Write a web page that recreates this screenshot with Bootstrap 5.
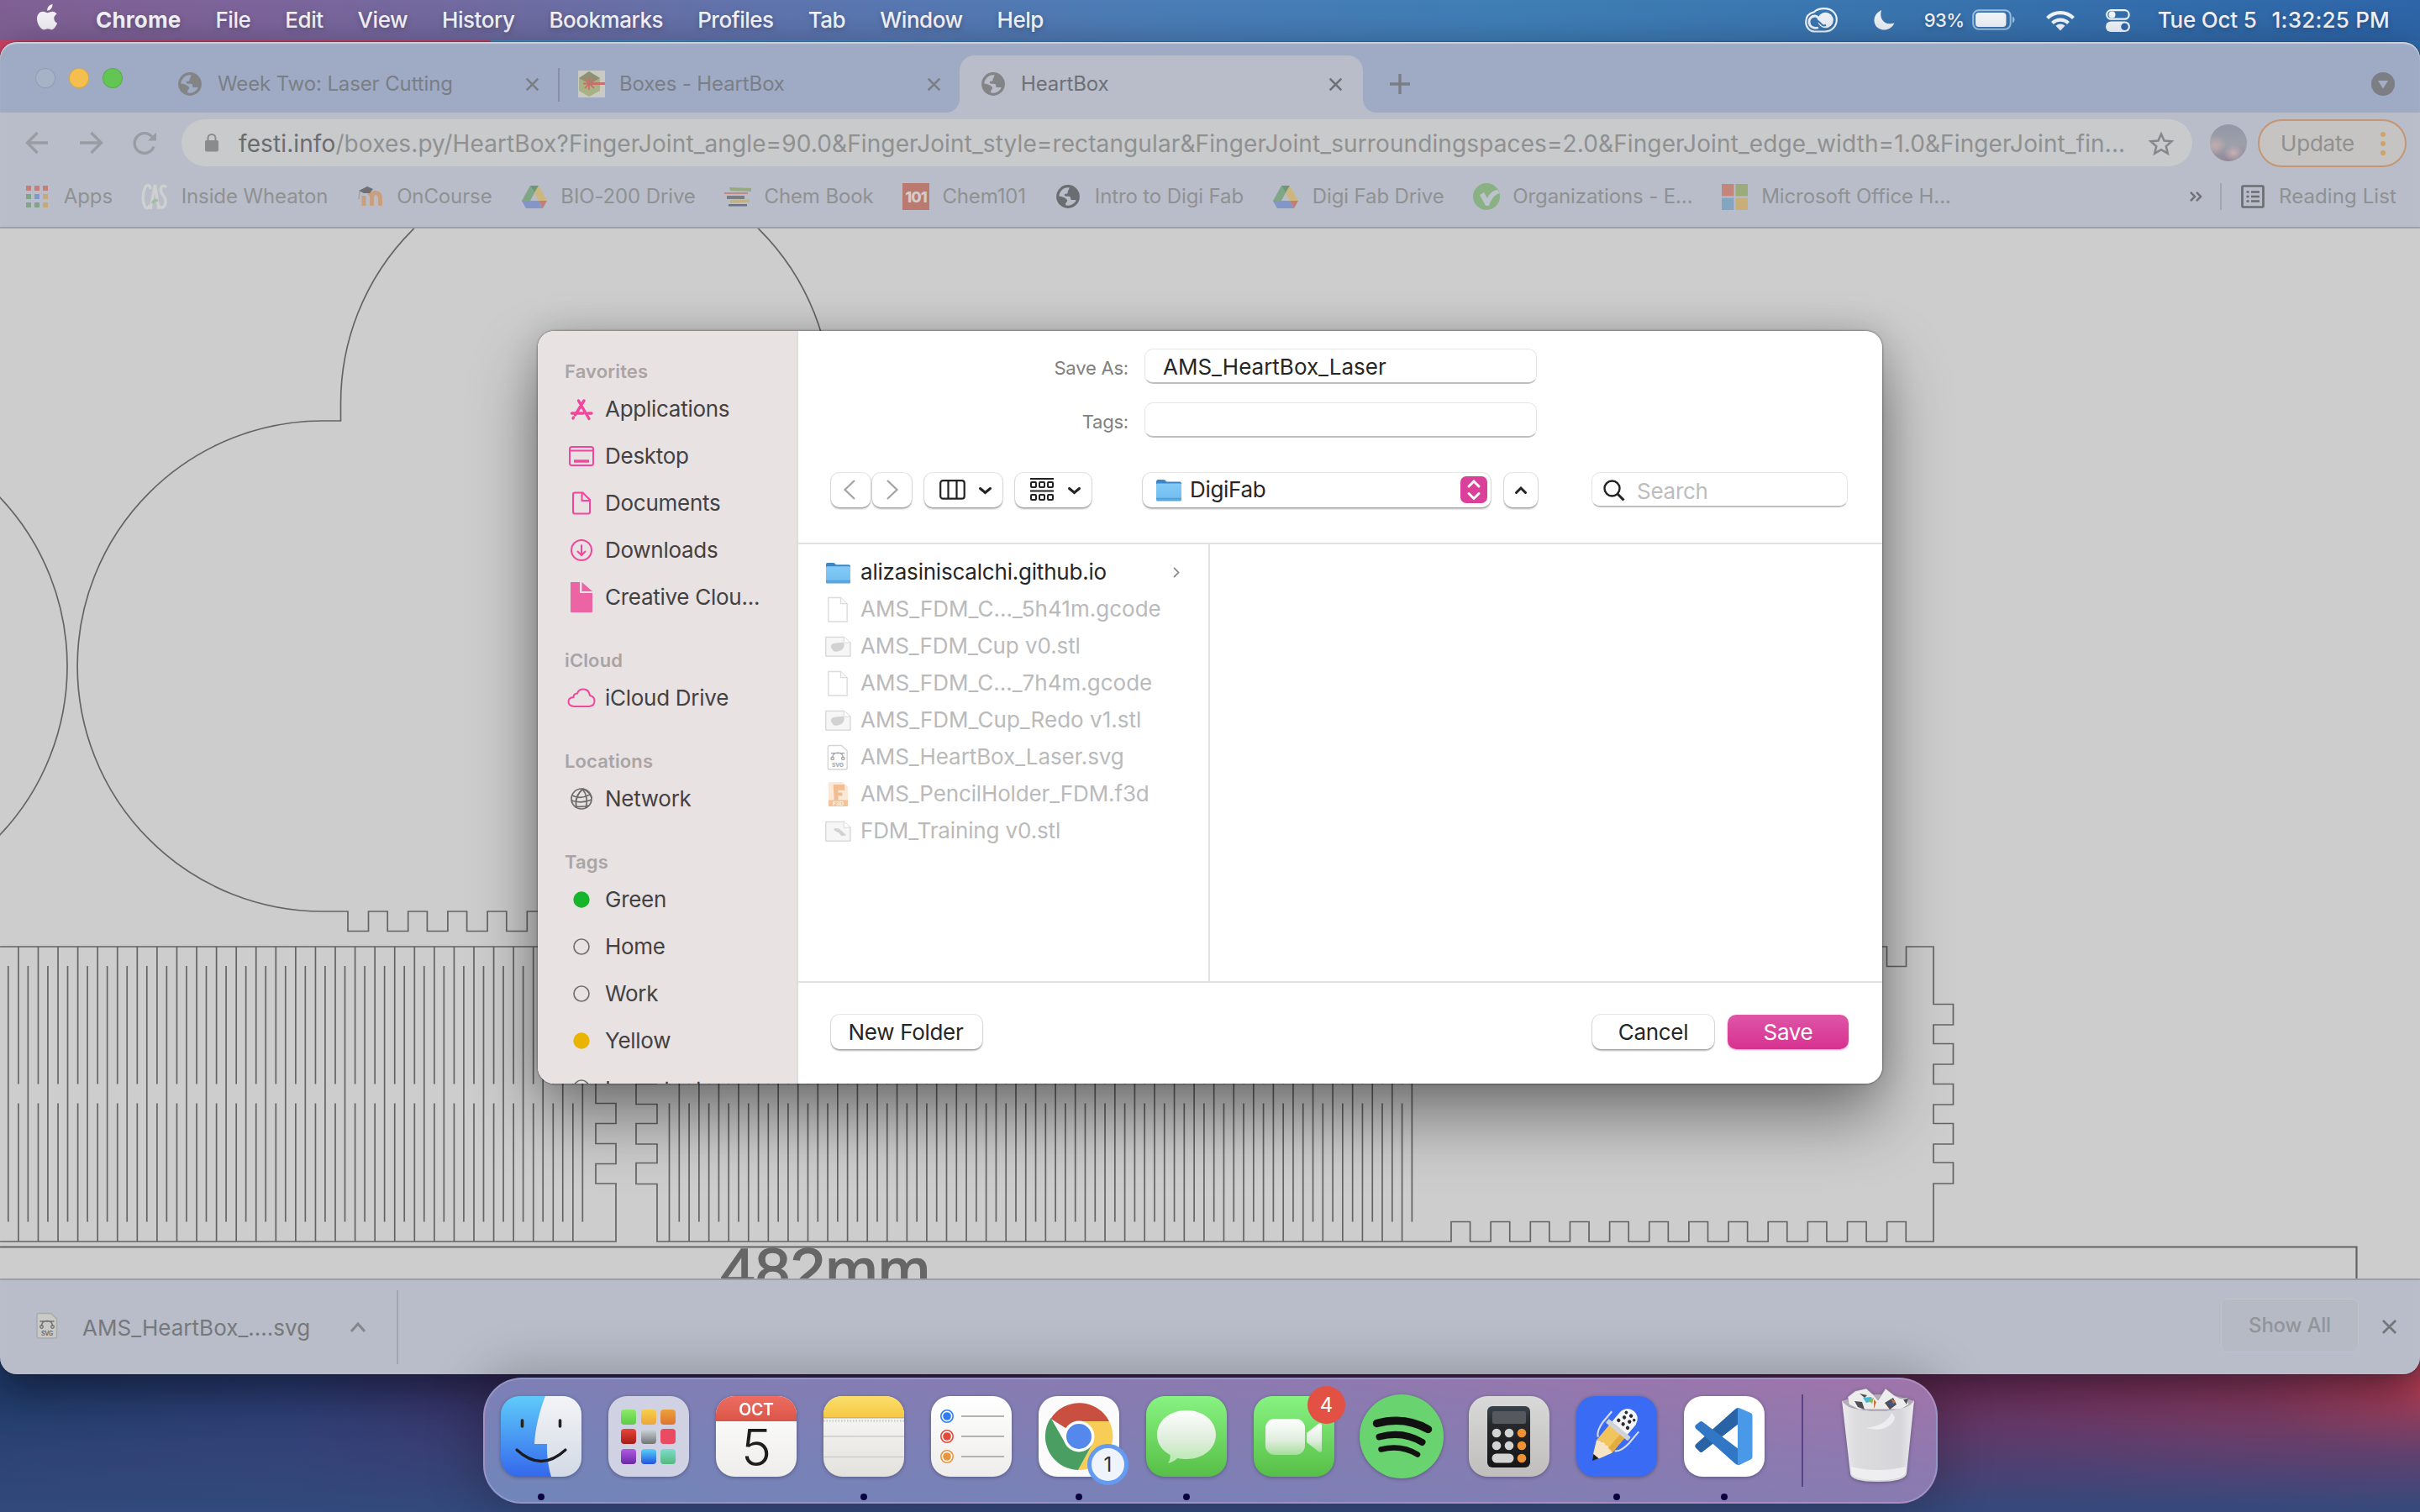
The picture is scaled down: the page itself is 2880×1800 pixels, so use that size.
<!DOCTYPE html>
<html lang="en">
<head>
<meta charset="utf-8">
<title>HeartBox</title>
<link rel="stylesheet" href="https://cdn.jsdelivr.net/npm/bootstrap@5.3.0/dist/css/bootstrap.min.css">
<script src="https://cdn.jsdelivr.net/npm/bootstrap@5.3.0/dist/js/bootstrap.bundle.min.js"></script>
<style>
html,body{width:2880px;height:1800px;overflow:hidden}
body{font-family:Inter,"Liberation Sans",sans-serif;font-size:26px;line-height:34px;letter-spacing:-.008em;color:#262626;margin:0;position:relative;
 background:
 linear-gradient(90deg,#d04464 0 583px,#4a97cd 585px,#2f6db0 100%) 0 0/100% 90px no-repeat,
 linear-gradient(180deg,transparent 1650px,rgba(58,72,125,.55) 1730px,rgba(50,74,125,.97) 1800px),
 radial-gradient(520px 200px at 2920px 1650px,#c03e50,rgba(150,55,80,.6) 45%,transparent),
 linear-gradient(90deg,#1f3c6a 0,#2a3c72 350px,#3c2f62 620px,#5a2c5c 1500px,#74305c 2300px,#84386a 2880px)}
svg{display:block;overflow:visible;flex:none}
.menubar{height:48px;background:linear-gradient(90deg,#806094 0,#7c649a 11%,#6d6ca2 22%,#5a76b0 35%,#4a7cb5 48%,#3f7eb5 62%,#3872ad 82%,#2d65a8 100%);color:#f4f3f8;font-weight:500;letter-spacing:-.018em;text-shadow:0 2px 6px rgba(0,0,0,.25);padding:0 36px 0 42px}
.menubar nav{gap:41px;margin-left:43px}
.menubar b{font-weight:700;letter-spacing:.006em}
.browser{position:relative;margin-top:2px;height:1586px;border-radius:20px;overflow:hidden;background:#b8bdc9}
.browser::after{content:"";position:absolute;inset:0;border-radius:20px;box-shadow:inset 0 2px 1px rgba(215,220,230,.75);pointer-events:none}
.frame-shadow{position:absolute;left:0;top:50px;width:2880px;height:1586px;border-radius:20px;box-shadow:0 16px 50px rgba(10,10,25,.6),0 0 2px rgba(0,0,0,.6)}
.strip{height:84px;background:#9fabc4;padding:16px 30px 0 42px;color:#7a7e86;font-size:24px;letter-spacing:-.005em}
.light{width:24px;height:24px;border-radius:50%;border:1.5px solid rgba(0,0,0,.12)}
.lights{gap:16px;margin-top:15px;height:24px;width:144px}
.tb{width:478px;height:68px;padding:0 20px 0 24px;position:relative}
.tb .ttl{margin-left:17px}
.tb.on{width:480px;background:#b8bdc9;border-radius:18px 18px 0 0;color:#6d7076}
.tb.on::before,.tb.on::after{content:"";position:absolute;bottom:0;width:16px;height:16px}
.tb.on::before{left:-16px;background:radial-gradient(circle at 0 0,#9fabc4 15.5px,#b8bdc9 16.5px)}
.tb.on::after{right:-16px;background:radial-gradient(circle at 100% 0,#9fabc4 15.5px,#b8bdc9 16.5px)}
.tb.sep{height:68px}
.tb.sep::after{content:"";position:absolute;right:-2px;top:15px;width:2px;height:40px;background:#8790a4}
.fav{width:32px;display:flex;justify-content:center}
.bar{height:72px;padding:0 16px 0 30px}
.omni{width:2394px;height:56px;border-radius:28px;background:#c8cacb;color:#8f9091;font-size:28px;letter-spacing:.0039em;padding:1px 22px 0 27px;white-space:nowrap}
.omni span{color:#6a6b6d}
.update{width:177px;height:57px;border:2.5px solid #c49673;border-radius:29px;background:#c5c4c2;color:#8f9091;padding:1px 23px 0 25px}
.avatar{width:44px;height:44px;border-radius:50%;background:radial-gradient(14px 12px at 6px 25px,#c3acad,transparent),radial-gradient(12px 10px at 28px 34px,#c5b0b2,transparent),linear-gradient(#9297a6,#9da0aa 55%,#918797)}
.marks{height:66px;padding:1px 28px 9px;font-size:24px;color:#8f9193;border-bottom:2px solid #9b9fa9;gap:34px;letter-spacing:-.005em}
.marks a{color:inherit;text-decoration:none;display:flex;align-items:center;gap:15.8px;white-space:nowrap}
.sheet{height:1250px;background:#cdcdcd}
.shelf{height:114px;border-top:2px solid #9b9ea8;color:#77787b;padding:0 24px 0 43px}
.shelf .rule{width:2px;height:88px;background:#a2a6b1}
.showall{width:164px;height:64px;border:1.5px solid #c0c3c8;border-radius:8px;font-size:24px;font-weight:500;color:#929499;background:#b5bac5}
.sheetdlg{position:absolute;left:640px;top:394px;width:1600px;height:896px;border-radius:20px;overflow:hidden;background:#fff}
.dlgshadow{position:absolute;left:640px;top:394px;width:1600px;height:896px;border-radius:20px;box-shadow:0 40px 80px rgba(0,0,0,.42),0 0 40px rgba(0,0,0,.14),0 0 2px 1px rgba(0,0,0,.3)}
.side{width:310px;background:#e8e2e2;border-right:2px solid #e2dddd;padding-top:1px;color:#434142;flex:none}
.side h6{margin:0;height:64px;padding:30px 0 0 32px;font-size:22px;line-height:34px;font-weight:600;color:#aaa4a5;letter-spacing:.006em}
.side .it{height:56px;padding-left:35px;gap:11px;letter-spacing:-.0105em;white-space:nowrap}
.side .it svg{width:34px;height:34px;margin-right:0}
.lbl{width:393px;font-size:22px;color:#808080;margin-right:19px;margin-top:3px;line-height:38px}
.fld{width:467px;height:42px;border-radius:10px;border:1.5px solid #e6e6e6;border-bottom:2px solid #bfbfbf;padding:2px 0 0 21px;display:flex;align-items:center;letter-spacing:0}
.pb{height:41px;border-radius:10px;background:#fff;box-shadow:0 0 0 1px rgba(0,0,0,.08),0 1.5px 2px rgba(0,0,0,.3);display:flex;align-items:center;justify-content:center;flex:none;letter-spacing:-.012em}
.files{width:490px;border-right:2px solid #e2e2e2;padding:11px 30px 0 32px;color:#bababa;letter-spacing:-.003em}
.files>div{height:44px;display:flex;align-items:center;gap:11px;white-space:nowrap}
.files svg.fi{width:31px;height:31px}
.foot{height:122px;border-top:2px solid #e2e2e2;padding:0 40px 3px 39px}
.save{background:linear-gradient(#df55a8,#d6328f);color:#fff;box-shadow:0 1px 2px rgba(214,50,143,.5)}
.dock{position:absolute;left:575px;top:1640px;width:1731px;height:150px;border-radius:46px;border:2px solid rgba(200,190,230,.35);background:linear-gradient(8deg,#7086ba 0,#7c80b6 35%,#8c7ab0 70%,#a074aa 100%);box-shadow:0 0 60px 10px rgba(0,0,0,.22);padding:20px 19px 0;gap:32px}
.dock .app{width:96px;height:96px;position:relative;flex:none}
.dock .app>svg{width:96px;height:96px;filter:drop-shadow(0 1px 2px rgba(0,0,0,.3))}
.dock .run::after{content:"";position:absolute;left:44px;top:116px;width:8px;height:8px;border-radius:50%;background:#0c0440}
.dock .bar2{width:2px;height:110px;background:rgba(70,50,120,.75);margin:-2px 10px 0 12px}
.bdg{position:absolute;border-radius:50%;display:flex;align-items:center;justify-content:center;letter-spacing:0}
</style>
</head>
<body>
<svg width="0" height="0" class="position-absolute">
<defs>
<symbol id="globe" viewBox="0 0 28 28"><circle cx="14" cy="14" r="12.3" fill="none" stroke="currentColor" stroke-width="3.2"/><path fill="currentColor" d="M16.5 2.5c-1.8 1.6-1 3-2.2 4.200-1.300 1.200-.3 2.700-.7 3.300-.7 1.100-3.800.2-3.900 2 0 1.900 2.500 1.800 4.800 1.800 2.500 0 2.800 1 2.600 2.800-.1 1.300 1.100 1.500 2.600 1.500h2.800c1.300 0 2.500.9 2.700 2.100 2-3 2.800-8.500.3-12.500C23.300 4.500 20 2.800 16.500 2.500zM2 13.500c2.200-.4 7 1.100 8.800 2.400 1.300 1 2.500 1.400 2.300 3.200-.2 1.700-1.700 1.900-1.900 3.200-.1 1 .1 2.300.2 3.600C6 24.800 1.500 20 2 13.500z"/></symbol>
<symbol id="cross" viewBox="0 0 20 20"><path d="M2 2l16 16M18 2L2 18" stroke="currentColor" stroke-width="3" fill="none"/></symbol>
<symbol id="drive" viewBox="0 0 30 27"><path fill="#7fa786" d="M10 0L15 8.700 5.200 26.500 0 18z"/><path fill="#6d9876" d="M10 0h10l-5 8.700z"/><path fill="#cdb77d" d="M20 0l10 18H20L15 8.700z"/><path fill="#8496c8" d="M0 18h20l5 9H5z"/><path fill="#c47e78" d="M20 18h10l-5 9z"/></symbol>
<linearGradient id="fold" x2="0" y2="1"><stop offset="0" stop-color="#83caf7"/><stop offset=".75" stop-color="#74c0f3"/><stop offset="1" stop-color="#4f9ed9"/></linearGradient>
<symbol id="folder" viewBox="0 0 32 32"><path fill="#3b86c6" d="M1 6.500Q1 4 3 4h7q1.500 0 2.500 1.500l.7 1H29q2 0 2 2V12H1z"/><rect x="1" y="8.500" width="30" height="21" rx="1.500" fill="url(#fold)"/><path d="M1 26.500h30" stroke="#4f9cd6" stroke-width="1"/></symbol>
<symbol id="doc" viewBox="0 0 32 32"><path fill="#fff" stroke="#dcdcdc" stroke-width="1.500" d="M4 1.500h15l8 7.500v22H4z"/><path d="M19 1.500V9h8" fill="#f7f7f7" stroke="#dcdcdc" stroke-width="1.300"/></symbol>
<symbol id="stl" viewBox="0 0 32 32"><path fill="#f6f6f6" stroke="#d5d5d5" stroke-width="1.300" d="M.8 4.500H23l8 7v16.500H.8z"/><path d="M23 4.500v7h8" fill="#fff" stroke="#d8d8d8"/><path fill="#d2d2d2" d="M8 14c2-3 8-2 13-3 5 1 2 8-2 10s-8 2-10-1c-1-2-3-3-1-6z"/></symbol>
<symbol id="stl2" viewBox="0 0 32 32"><path fill="#f6f6f6" stroke="#d5d5d5" stroke-width="1.300" d="M.8 4.500H23l8 7v16.500H.8z"/><path d="M23 4.500v7h8" fill="#fff" stroke="#d8d8d8"/><path fill="#d2d2d2" d="M11 12l6 1 6 5 3 3-6 1-3-4-6-3z"/></symbol>
<symbol id="svgdoc" viewBox="0 0 32 32"><path fill="var(--p,#fff)" stroke="var(--l,#d5d5d5)" stroke-width="1.500" d="M6 1.500h14l7 6.500v21q0 2-2 2H6q-2.500 0-2.500-2V3.500q0-2 2.500-2z"/><g fill="none" stroke="var(--k,#a3a3a3)" stroke-width="1.300"><path d="M7 11h17M9 17c0-4.500 3-6.500 6.500-6.500s6.500 2 6.500 6.500"/><circle cx="9" cy="17.500" r="1.800"/><circle cx="22" cy="17.500" r="1.800"/></g><text x="15.500" y="28" font-size="7" font-weight="700" text-anchor="middle" fill="var(--k,#a3a3a3)" font-family="Inter">SVG</text></symbol>
<symbol id="f3d" viewBox="0 0 32 32"><path fill="#fae9d9" d="M4 1h17l7 6v16H4z"/><path fill="#efbf93" d="M10 4h14v7h-8v3h5v4h-5v6h-5z"/><path fill="#f3c49a" d="M4 23h24v7q0 1-1 1H5q-1 0-1-1z"/><text x="16" y="29.500" font-size="7" font-weight="700" text-anchor="middle" fill="#fdf1e4" font-family="Inter">F3D</text></symbol>
<linearGradient id="gFi" x2="0" y2="1"><stop offset="0" stop-color="#5fcbfa"/><stop offset="1" stop-color="#3468ec"/></linearGradient>
<linearGradient id="gFw" x2="0" y2="1"><stop offset="0" stop-color="#f3f4f6"/><stop offset="1" stop-color="#d2dae6"/></linearGradient>
<linearGradient id="gGr" x2="0" y2="1"><stop offset="0" stop-color="#87f381"/><stop offset="1" stop-color="#57bf47"/></linearGradient>
<linearGradient id="gYe" x2="0" y2="1"><stop offset="0" stop-color="#fbdf6c"/><stop offset="1" stop-color="#f6c843"/></linearGradient>
<linearGradient id="gWh" x2="0" y2="1"><stop offset="0" stop-color="#fff"/><stop offset="1" stop-color="#eeedeb"/></linearGradient>
<linearGradient id="gNo" x2="0" y2="1"><stop offset="0" stop-color="#fbfbfa"/><stop offset="1" stop-color="#e3e1dc"/></linearGradient>
<linearGradient id="gRd" x2="0" y2="1"><stop offset="0" stop-color="#ee6c60"/><stop offset="1" stop-color="#d95548"/></linearGradient>
<linearGradient id="gCa" x2="0" y2="1"><stop offset="0" stop-color="#d9d9d9"/><stop offset="1" stop-color="#bfbebc"/></linearGradient>
<linearGradient id="gCb" x2="0" y2="1"><stop offset="0" stop-color="#39424c"/><stop offset=".3" stop-color="#26282b"/><stop offset="1" stop-color="#161617"/></linearGradient>
<linearGradient id="gTr" x2="1" y2="0"><stop offset="0" stop-color="#ececee"/><stop offset=".2" stop-color="#dcdcde"/><stop offset=".8" stop-color="#d6d5d9"/><stop offset="1" stop-color="#ebebee"/></linearGradient>
<linearGradient id="gBu" x2="0" y2="1"><stop offset="0" stop-color="#fdfefd"/><stop offset=".6" stop-color="#dcecd9"/><stop offset="1" stop-color="#b4eaab"/></linearGradient>
<linearGradient id="gFt" x2="0" y2="1"><stop offset="0" stop-color="#fff"/><stop offset=".6" stop-color="#dfeedd"/><stop offset="1" stop-color="#a6dd9c"/></linearGradient>
<linearGradient id="gL1" x2="0" y2="1"><stop offset="0" stop-color="#8bea68"/><stop offset="1" stop-color="#5dcb47"/></linearGradient>
<linearGradient id="gL2" x2="0" y2="1"><stop offset="0" stop-color="#f6cf4a"/><stop offset="1" stop-color="#efa638"/></linearGradient>
<linearGradient id="gL3" x2="0" y2="1"><stop offset="0" stop-color="#eda03c"/><stop offset="1" stop-color="#de742f"/></linearGradient>
<linearGradient id="gL4" x2="0" y2="1"><stop offset="0" stop-color="#e8453a"/><stop offset="1" stop-color="#a61d16"/></linearGradient>
<linearGradient id="gL5" x2="0" y2="1"><stop offset="0" stop-color="#d0d9df"/><stop offset="1" stop-color="#717476"/></linearGradient>
<linearGradient id="gL6" x2="0" y2="1"><stop offset="0" stop-color="#b05ae4"/><stop offset="1" stop-color="#6b28a4"/></linearGradient>
<linearGradient id="gL7" x2="0" y2="1"><stop offset="0" stop-color="#56d2fa"/><stop offset="1" stop-color="#2452e0"/></linearGradient>
<linearGradient id="gL8" x2="0" y2="1"><stop offset="0" stop-color="#7fdccb"/><stop offset="1" stop-color="#52b87d"/></linearGradient>
<clipPath id="sq"><rect width="96" height="96" rx="22"/></clipPath>
</defs></svg>

<header class="menubar d-flex align-items-center justify-content-between">
 <div class="d-flex align-items-center">
  <svg width="29" height="34" viewBox="0 0 29 34" fill="#f3f1f6" style="margin-top:-6px"><path d="M20.500 1c.2 2.500-.8 4.400-2 5.700-1.200 1.300-2.800 2.100-4.300 2-.2-2.300.7-4.200 1.900-5.500C17.300 1.900 19 1.100 20.500 1z"/><path d="M25.600 12.800c-2.300 1.400-3.400 3.200-3.300 5.300.1 2.700 1.600 4.600 3.800 5.500-.8 2.600-3.700 7.700-6.300 7.700-1.800 0-2.600-1.100-4.900-1.100s-3 1.100-4.800 1.100C6.500 31.300 2 24.500 2 18.300 2 13 5.400 9.800 9.100 9.800c2.200 0 4.100 1.400 5.500 1.400 1.300 0 3.400-1.500 6-1.500 1.800 0 3.900 1.100 5 3.100z"/></svg>
  <nav class="d-flex"><b>Chrome</b><span>File</span><span>Edit</span><span>View</span><span>History</span><span>Bookmarks</span><span>Profiles</span><span>Tab</span><span>Window</span><span>Help</span></nav>
 </div>
 <div class="d-flex align-items-center">
  <svg width="39" height="30" viewBox="0 0 39 30" fill="none" stroke="#eef2f8" stroke-width="2.200"><path d="M11 5.200C14 2.300 18 1.200 23 1.200c9 0 14.800 5.800 14.800 13.300S32 28.500 24 28.500H12C5.500 28.500 1.200 23.500 1.200 17S5.500 6.500 11 5.200z"/><circle cx="24.500" cy="15" r="9.300" fill="#eef2f8" stroke="none"/><path d="M16 24c-6 1.500-11-1.500-11-7 0-4 3-7 7-7 6 0 7 12 14 12" stroke-width="2.800"/><path d="M13 15.500c5-1 7 9 12 5" stroke="#3a74ae" stroke-width="2"/></svg>
  <svg width="27" height="27" viewBox="0 0 27 27" fill="#eef2f8" style="margin-left:42px"><path d="M10 1C2 5 0 12 2.500 18c3 7.500 17 10.500 23-1.500C13 20 7 11 10 1z"/></svg>
  <span style="margin-left:34px;font-size:22px">93%</span>
  <svg width="51" height="26" viewBox="0 0 51 26" style="margin-left:9px"><rect x="1.200" y="1.200" width="44.500" height="22.500" rx="6.500" fill="none" stroke="#9dbfe0" stroke-width="2"/><rect x="4" y="4" width="36.500" height="17" rx="4" fill="#f0f4f9"/><path d="M48 8.500q2.600 1 2.600 4T48 16.500z" fill="#9dbfe0"/></svg>
  <svg width="34" height="25" viewBox="0 0 34 25" style="margin-left:37px" fill="none" stroke="#f0f4f9" stroke-width="4.200"><path d="M1.500 9.500a22 22 0 0 1 31 0"/><path d="M7.500 15.500a13.500 13.500 0 0 1 19 0"/><path fill="#f0f4f9" stroke="none" d="M17 24.500l-5.500-5.800a8 8 0 0 1 11 0z"/></svg>
  <svg width="29" height="27" viewBox="0 0 29 27" style="margin-left:37px"><rect x="1.200" y="1.200" width="26.500" height="10.500" rx="5.200" fill="none" stroke="#f0f4f9" stroke-width="2.200"/><circle cx="7.500" cy="6.500" r="4" fill="#f0f4f9"/><rect y="14.500" width="29" height="12.500" rx="6.200" fill="#f0f4f9"/><circle cx="22.500" cy="20.800" r="4.300" fill="#3069a8"/></svg>
  <span style="margin-left:33px;letter-spacing:-.008em">Tue Oct 5</span><span style="margin-left:18px;letter-spacing:.008em">1:32:25 PM</span>
 </div>
</header>

<div class="frame-shadow"></div>
<main class="browser">
 <div class="strip d-flex">
  <div class="lights d-flex"><i class="light" style="background:#a6b3c7"></i><i class="light" style="background:#f5bf4f"></i><i class="light" style="background:#62c554"></i></div>
  <div class="tb sep d-flex align-items-center"><span class="fav"><svg width="28" height="28" color="#838486"><use href="#globe"/></svg></span><span class="ttl flex-grow-1">Week Two: Laser Cutting</span><svg width="17" height="17" style="margin-right:2px"><use href="#cross"/></svg></div>
  <div class="tb d-flex align-items-center"><span class="fav"><svg width="32" height="32" viewBox="0 0 32 32"><path fill="#c9cac4" d="M0 0h32v32H0z"/><path fill="#a8b383" d="M13 1l13 8v15l-13 7L1 24V9z"/><path fill="#8d9372" d="M13 1l13 8-12 7L1 9z"/><path d="M13 8v15M6 15.500h20M8 10l11 11M19 10L8 21" stroke="#c9706c" stroke-width="1.800"/><path d="M16 14h16v3H16z" fill="#c9706c"/></svg></span><span class="ttl flex-grow-1">Boxes - HeartBox</span><svg width="17" height="17" style="margin-right:2px"><use href="#cross"/></svg></div>
  <div class="tb on d-flex align-items-center"><span class="fav"><svg width="28" height="28" color="#838486"><use href="#globe"/></svg></span><span class="ttl flex-grow-1">HeartBox</span><svg width="17" height="17" style="margin-right:4px"><use href="#cross"/></svg></div>
  <svg width="24" height="24" viewBox="0 0 24 24" style="margin:22px 0 0 32px"><path d="M12 0v24M0 12h24" stroke="#7a7d84" stroke-width="3.400"/></svg>
  <svg width="28" height="28" viewBox="0 0 28 28" class="ms-auto" style="margin-top:20px"><circle cx="14" cy="14" r="14" fill="#7c7e84"/><path d="M8 10h12l-6 9.500z" fill="#a5afc4"/></svg>
 </div>
 <div class="bar d-flex align-items-center">
  <svg width="158" height="28" viewBox="0 0 158 28" fill="none" stroke="#9a9ca3" stroke-width="3.300"><path d="M27 14H2.500M14.500 2L2.500 14l12 12M65 14h25M78.500 2l12 12-12 12"/><path d="M153 18.500a11.800 11.800 0 1 1-2-11.500"/><path d="M156 1.500v10h-10z" fill="#9a9ca3" stroke="none"/></svg>
  <div class="omni d-flex align-items-center" style="margin-left:28px">
   <svg width="18" height="22" viewBox="0 0 18 22" style="margin-top:-1px"><rect x="1" y="8" width="16" height="13.500" rx="2" fill="#8a8b8d"/><path d="M4.500 9V5.500a4.500 4.500 0 0 1 9 0V9" fill="none" stroke="#8a8b8d" stroke-width="2"/></svg>
   <div class="flex-grow-1" style="margin-left:23px"><span>festi.info</span>/boxes.py/HeartBox?FingerJoint_angle=90.0&amp;FingerJoint_style=rectangular&amp;FingerJoint_surroundingspaces=2.0&amp;FingerJoint_edge_width=1.0&amp;FingerJoint_fin...</div>
   <svg width="30" height="28" viewBox="0 0 30 28" fill="none" stroke="#85878a" stroke-width="2.500"><path d="M15 2.500l3.600 8 8.900.8-6.700 5.800 2 8.600L15 21.200l-7.800 4.500 2-8.600-6.700-5.800 8.900-.8z"/></svg>
  </div>
  <i class="avatar" style="margin-left:21px"></i>
  <div class="update d-flex align-items-center justify-content-between" style="margin-left:13px">Update<svg width="6" height="28" viewBox="0 0 6 28" fill="#cda468"><circle cx="3" cy="3" r="3"/><circle cx="3" cy="14" r="3"/><circle cx="3" cy="25" r="3"/></svg></div>
 </div>
 <div class="marks d-flex align-items-center">
  <a><span class="fav"><svg width="26" height="26" viewBox="0 0 26 26"><path fill="#c57f78" d="M0 0h6v6H0zM10 0h6v6h-6zM20 0h6v6h-6z"/><path fill="#83a488" d="M0 10h6v6H0zM0 20h6v6H0zM10 20h6v6h-6z"/><path fill="#8099c8" d="M10 10h6v6h-6z"/><path fill="#c5aa78" d="M20 10h6v6h-6zM20 20h6v6h-6z"/></svg></span>Apps</a>
  <a><span class="fav"><svg width="32" height="32" viewBox="0 0 32 32"><g fill="none" stroke="#cfd0d0" stroke-width="3.400"><path d="M11.500 7C10 1 6 1 4 7s-2.500 14 0 20 5 1.500 6.500-1"/><path d="M11 31L16.500 2l4.500 29"/><path d="M30 5c-5-5-8 1-6 6s6 6 5 12-5 8-8 4"/></g><path d="M13 24q3-5 7-3" stroke="#9dbd9c" stroke-width="3" fill="none"/></svg></span>Inside Wheaton</a>
  <a><span class="fav"><svg width="32" height="32" viewBox="0 0 32 32"><path fill="none" stroke="#c99f7d" stroke-width="5" d="M9 27V15M18.500 27V16q-1-5-5-4.500M18.500 16q1-5 5-4.500t5 5V27"/><path fill="#6f7073" d="M3 9l10-5 7 3-4 5H9z"/><path d="M4 10l-1 9" stroke="#a99f97" stroke-width="1.500"/></svg></span>OnCourse</a>
  <a><span class="fav"><svg width="30" height="27"><use href="#drive"/></svg></span>BIO-200 Drive</a>
  <a><span class="fav"><svg width="32" height="24" viewBox="0 0 32 24"><path fill="#98a981" d="M6 1l26 1v4L7 5z"/><path fill="#c08c80" d="M0 7h28v2H0z"/><path fill="#7b7d80" d="M3 11h21v4H3z"/><path fill="#bfb27e" d="M7 16.500l23-1v3l-23 1z"/><path fill="#6d7181" d="M5 21h22v2.500H5z"/></svg></span>Chem Book</a>
  <a><span class="fav"><svg width="32" height="32" viewBox="0 0 32 32"><path fill="#bb7a70" d="M0 0h32v32H0z"/><text x="16" y="22.500" font-size="18" font-weight="800" text-anchor="middle" fill="#d3cdca" font-family="Inter" letter-spacing="-1">101</text></svg></span>Chem101</a>
  <a><span class="fav"><svg width="28" height="28" color="#6c6d70"><use href="#globe"/></svg></span>Intro to Digi Fab</a>
  <a><span class="fav"><svg width="30" height="27"><use href="#drive"/></svg></span>Digi Fab Drive</a>
  <a><span class="fav"><svg width="32" height="32" viewBox="0 0 32 32"><circle cx="16" cy="16" r="16" fill="#8ab184"/><path fill="#bcc3cb" d="M8 14l5-3 4 7q4-9 12-10l3 4q-8 1-13 15h-4z"/></svg></span>Organizations - E...</a>
  <a><span class="fav"><svg width="31" height="31" viewBox="0 0 31 31"><path fill="#c4857a" d="M0 0h14.500v14.500H0z"/><path fill="#9bab7a" d="M16.500 0H31v14.500H16.500z"/><path fill="#82a5c1" d="M0 16.500h14.500V31H0z"/><path fill="#c9ae78" d="M16.500 16.500H31V31H16.500z"/></svg></span>Microsoft Office H...</a>
  <div class="ms-auto d-flex align-items-center">
   <svg width="14" height="12" viewBox="0 0 14 12" fill="none" stroke="#6f7175" stroke-width="2.500"><path d="M1 .8L6 6l-5 5.200M8 .8L13 6l-5 5.200"/></svg>
   <i style="width:2px;height:32px;background:#a1a6b2;margin:0 23px 0 22px"></i>
   <svg width="28" height="28" viewBox="0 0 28 28" fill="none" stroke="#6b6d71" stroke-width="2.700"><rect x="1.500" y="1.500" width="25" height="25" rx="1"/><path d="M6.500 8.500h3M12 8.500h10M6.500 14h3M12 14h10M6.500 19.500h3M12 19.500h10"/></svg>
   <span style="margin-left:17px;letter-spacing:.004em">Reading List</span>
  </div>
 </div>
 <div class="sheet">
  <svg width="2880" height="1250" viewBox="0 272 2880 1250" style="overflow:hidden" fill="none" stroke="#646464" stroke-width="1.700">
   <path d="M384 1085A292 292 0 0 1 384 501H405.500V480"/>
   <circle cx="697.500" cy="480" r="292" stroke-dasharray="917.350 2000" transform="rotate(180 697.500 480)"/>
   <circle cx="-212" cy="793" r="292"/>
   <path id="teethA"/><path id="hinge"/>
   <path d="M0 1127H700M0 1478H733V1409H709V1385.500H733V1361.500H709V1337.500H733V1313.500H709V1289H733"/>
   <path id="teethB"/>
   <path stroke-width="2.200" d="M0 1484.500H2804.500V1530"/>
   <text x="857" y="1537.500" font-size="75" textLength="250" font-family="Liberation Sans" fill="#666" stroke="#666" stroke-width="1.500">482mm</text>
  </svg>
 </div>
 <div class="shelf d-flex align-items-center">
  <svg width="27" height="30" viewBox="3 1 26 30" style="--p:#c9c9c6;--l:#a9aaaa;--k:#6f7072;margin-top:-4px"><use href="#svgdoc" width="32" height="32"/></svg>
  <span style="margin-left:28px;margin-top:1px;letter-spacing:.001em">AMS_HeartBox_....svg</span>
  <svg width="18" height="12" viewBox="0 0 18 12" style="margin-left:48px" fill="none" stroke="#85878c" stroke-width="3"><path d="M1 11l8-9 8 9"/></svg>
  <i class="rule" style="margin-left:37px"></i>
  <div class="showall d-flex align-items-center justify-content-center ms-auto" style="margin-top:-4px">Show All</div>
  <svg width="19" height="19" color="#75777b" style="margin:-2px 3px 0 27px"><use href="#cross"/></svg>
 </div>
</main>

<div class="dock d-flex">
 <div class="app run"><svg viewBox="0 0 96 96"><g clip-path="url(#sq)"><path fill="url(#gFi)" d="M0 0h96v96H0z"/><path fill="url(#gFw)" d="M53 0C46 18 41 38 40 57h15c-.5 13 1.500 27 5 39h36V0z"/></g><path d="M25.500 29v7M70.500 29v7" stroke="#222" stroke-width="3.600" stroke-linecap="round"/><path d="M19 64q29 27 58 0" fill="none" stroke="#1b1b22" stroke-width="3.200" stroke-linecap="round"/></svg></div>
 <div class="app"><svg viewBox="0 0 96 96"><rect width="96" height="96" rx="22" fill="#d0d1e3"/><g><rect x="15" y="16" width="18" height="18" rx="4" fill="url(#gL1)"/><rect x="39" y="16" width="18" height="18" rx="4" fill="url(#gL2)"/><rect x="62" y="16" width="18" height="18" rx="4" fill="url(#gL3)"/><rect x="15" y="39" width="18" height="18" rx="4" fill="url(#gL4)"/><rect x="39" y="39" width="18" height="18" rx="4" fill="url(#gL5)"/><rect x="62" y="39" width="18" height="18" rx="4" fill="#e94c60"/><rect x="15" y="63" width="18" height="18" rx="4" fill="url(#gL6)"/><rect x="39" y="63" width="18" height="18" rx="4" fill="url(#gL7)"/><rect x="62" y="63" width="18" height="18" rx="4" fill="url(#gL8)"/></g></svg></div>
 <div class="app"><svg viewBox="0 0 96 96"><g clip-path="url(#sq)"><path fill="url(#gWh)" d="M0 0h96v96H0z"/><path fill="url(#gRd)" d="M0 0h96v30H0z"/></g><text x="48" y="23" font-size="19.500" font-weight="600" fill="#fff" text-anchor="middle" letter-spacing="-.3">OCT</text><text x="48" y="82.500" font-size="61" font-weight="300" fill="#1e1e1e" text-anchor="middle">5</text></svg></div>
 <div class="app run"><svg viewBox="0 0 96 96"><g clip-path="url(#sq)"><path fill="url(#gNo)" d="M0 0h96v96H0z"/><path fill="url(#gYe)" d="M0 0h96v25H0z"/><path fill="#b7b3a6" d="M0 25h96v1.500H0z"/><path d="M0 29.500h96" stroke="#c3c1bc" stroke-width="2" stroke-dasharray="1.500 2"/><path d="M0 48h96M0 72.500h96" stroke="#cfcdcb" stroke-width="1.600"/></g></svg></div>
 <div class="app"><svg viewBox="0 0 96 96"><rect width="96" height="96" rx="22" fill="url(#gWh)"/><g stroke-width="1.600" fill="#fff"><circle cx="19" cy="24" r="7.200" stroke="#2f7cf6"/><circle cx="19" cy="48" r="7.200" stroke="#e34a3a"/><circle cx="19" cy="72" r="7.200" stroke="#e9953a"/></g><circle cx="19" cy="24" r="4.800" fill="#2f7cf6"/><circle cx="19" cy="48" r="4.800" fill="#e34a3a"/><circle cx="19" cy="72" r="4.800" fill="#e9953a"/><path d="M36 24h51M36 48h51M36 72h51" stroke="#b3b3b5" stroke-width="1.800"/></svg></div>
 <div class="app run"><svg viewBox="0 0 96 96"><rect width="96" height="96" rx="22" fill="#fbfbfc"/><path fill="#c94f40" d="M48 48L14.500 27A40 40 0 0 1 84 30H48z"/><path fill="#f7cc57" d="M84 30A40 40 0 0 1 47 88L64 57 48 30z"/><path fill="#4a9e62" d="M14.500 26A40 40 0 0 0 47 88L64 57 34 60z"/><circle cx="48" cy="48" r="18.500" fill="#fff"/><circle cx="48" cy="48" r="15" fill="#5588ec"/></svg><span class="bdg" style="left:58px;top:57px;width:49px;height:49px;border:5px solid #629bf1;background:#eff3fc;font-size:24px;color:#333">1</span></div>
 <div class="app run"><svg viewBox="0 0 96 96"><rect width="96" height="96" rx="22" fill="url(#gGr)"/><path fill="url(#gBu)" d="M48 17c20 0 35 12.500 35 29S68 75 48 75c-4 0-7-.3-10.500-1.300C34 77 30 79 26 80c2-3 3-6 2.500-10C18 64 13 56 13 46c0-16.500 15-29 35-29z"/></svg></div>
 <div class="app"><svg viewBox="0 0 96 96"><rect width="96" height="96" rx="22" fill="url(#gGr)"/><rect x="14" y="27" width="47" height="43" rx="11" fill="url(#gFt)"/><path fill="url(#gFt)" d="M63 44l14-11q4-2 4 2v29q0 4-4 2L63 55z"/></svg><span class="bdg" style="left:64px;top:-12px;width:45px;height:45px;background:#e35144;color:#fff;font-size:24px">4</span></div>
 <div class="app"><svg viewBox="0 0 96 96"><circle cx="48" cy="48" r="50" fill="#69d46f"/><g fill="none" stroke="#111" stroke-linecap="round"><path stroke-width="9.500" d="M18.500 32.500q33-9 61 7"/><path stroke-width="8" d="M21.500 48.500q28-7.500 51 6.500"/><path stroke-width="6.500" d="M23.500 63.500q24-6 43.500 6"/></g></svg></div>
 <div class="app"><svg viewBox="0 0 96 96"><rect width="96" height="96" rx="22" fill="url(#gCa)"/><rect x="22" y="12" width="51" height="73" rx="6" fill="url(#gCb)"/><rect x="28" y="18" width="40" height="15" rx="2" fill="#55585c"/><g fill="#d3d3d3"><circle cx="33" cy="44" r="5.300"/><circle cx="48" cy="44" r="5.300"/><circle cx="33" cy="59" r="5.300"/><circle cx="48" cy="59" r="5.300"/><rect x="27.500" y="68.500" width="26" height="11" rx="5.500"/></g><g fill="#ee9234"><circle cx="63" cy="44" r="5.300"/><circle cx="63" cy="59" r="5.300"/><circle cx="63" cy="74" r="5.300"/></g></svg></div>
 <div class="app run"><svg viewBox="0 0 96 96"><rect width="96" height="96" rx="22" fill="#3a6bf4"/><g transform="translate(19 77) rotate(-50)"><path fill="none" stroke="#d5dbea" stroke-width="2.200" d="M60-20H44Q30-19 26-13M62 20H44Q30 19 26 13"/><path fill="#1d1d1f" d="M0 0l9-5v10z"/><path fill="#f7e4c4" d="M7-4.500L22-12q4 3 2 6 4 3 1 6 3 3 0 6 2 4-3 6L7 4.500z"/><path fill="#f2c45c" d="M22-12H47V12H22q3-3 1-6 4-3 1-6 3-3 0-6 1-4-2-6z"/><path fill="#e3ac42" d="M24 5H47v7H22q3-3 2-7z"/><path fill="#f4f5f8" d="M50-12h16q11 2 11 12t-11 12H50z"/><rect x="45" y="-17" width="6" height="34" rx="1" fill="#cfd2da"/><g fill="#2b2b30"><circle cx="57" cy="-7" r="2.200"/><circle cx="57" cy="0" r="2.200"/><circle cx="57" cy="7" r="2.200"/><circle cx="64" cy="-4" r="2.200"/><circle cx="64" cy="4" r="2.200"/><circle cx="70" cy="-6" r="1.900"/><circle cx="70.500" cy="1" r="2.200"/><circle cx="69" cy="7" r="1.700"/></g></g></svg></div>
 <div class="app run"><svg viewBox="0 0 96 96"><rect width="96" height="96" rx="22" fill="#fff"/><path fill="#2863a5" d="M65 14q-2.500 0-4.500 2L14 57.500q-1.500 2 0 4l5 5q1.500 1 3 0L65 33z"/><path fill="#3277c6" d="M65 82q-2.500 0-4.500-2L14 38.500q-1.500-2 0-4l5-4q1.500-1 3 0L65 63z"/><path fill="#4a99e9" d="M64 14.200q1-.6 2 0L79.500 20q2 1 2 3v49.500q0 2-2 3L66 82q-1 .4-2 0z"/></svg></div>
 <i class="bar2"></i>
 <div class="app" style="margin-left:-1px"><svg viewBox="0 0 96 96"><path fill="#b6aabb" d="M5 6q43-16 86 0-3 10-43 12Q10 16 5 6z"/><path fill="#ececec" stroke="#8d8d90" stroke-width=".6" d="M13 10l-1-9 9-7 13-3 9 8 5 6 9-14 10 8 8 4 8-1 2 8-10 6H25z"/><path fill="#505056" d="M20 6l9 1 3 9-8-3zM56 8l10-6 4 8-8 6zM26-3l9 2-3 3zM78 4l6-1-2 7z"/><path fill="#46b8d8" d="M30 2l10-1 2 5-8 2z"/><path fill="#8fb85a" d="M36 5l7-3-2 7z"/><path fill="#c8743a" d="M43 4l3 3-3 8zM64 3l5 4-4 3z"/><path fill="#3a5a9a" d="M60 9l5-3 2 6z"/><path fill="url(#gTr)" d="M5 5q4 9 25 11.500 18 2.500 36 0Q87 14 91 5L82 92q-1 10-34 10T15 92z"/><path fill="#f3f3f5" opacity=".8" d="M15.500 84q32 8 66 0l-1 8q-4 8-32 8t-32-8zM34 38q24-3 30-18 10 8-6 17-8 5-24 1z"/></svg></div>
</div>

<div class="dlgshadow"></div>
<section class="sheetdlg d-flex">
 <aside class="side">
  <h6>Favorites</h6>
  <div class="it d-flex align-items-center"><svg viewBox="0 0 34 34" fill="none" stroke="#f0469b" stroke-width="3.400" stroke-linecap="round"><path d="M13.500 7L26 28.500M20 7L9.500 24M5.500 22H19M25 22h4M7 28l.5-1"/></svg>Applications</div>
  <div class="it d-flex align-items-center"><svg viewBox="0 0 34 34" fill="none" stroke="#f0469b" stroke-width="2"><rect x="3" y="6" width="28" height="22" rx="2.500"/><path d="M3 10.500h28"/><path d="M8 23h18" stroke-width="3.400"/></svg>Desktop</div>
  <div class="it d-flex align-items-center"><svg viewBox="0 0 34 34" fill="none" stroke="#f0469b" stroke-width="2"><path d="M9 4.500h9.500l8.500 8.500v14.500q0 2-2 2H9q-2 0-2-2v-21q0-2 2-2z"/><path d="M17.500 4.500v9.500H27"/></svg>Documents</div>
  <div class="it d-flex align-items-center"><svg viewBox="0 0 34 34" fill="none" stroke="#f0469b" stroke-width="2"><circle cx="17" cy="17" r="12"/><path d="M17 10.500v12M12 18l5 5 5-5"/></svg>Downloads</div>
  <div class="it d-flex align-items-center"><svg viewBox="0 0 34 34" fill="#ec64a3"><path d="M4-1h11v13h15v22q0 1-1 1H5q-1 0-1-1z"/><path d="M17.500-1L30 10H17.500z"/></svg>Creative Clou...</div>
  <h6>iCloud</h6>
  <div class="it d-flex align-items-center"><svg viewBox="0 0 34 34" fill="none" stroke="#f0469b" stroke-width="2"><path d="M8.500 27Q1.500 26.500 1.500 21.500T7.500 16q0-4 4.500-4.500 1.500-5 7-5 7 0 8 7.500 5.500 1 5.500 6.500T26.500 27z"/></svg>iCloud Drive</div>
  <h6>Locations</h6>
  <div class="it d-flex align-items-center"><svg viewBox="0 0 34 34" fill="none" stroke="#6c6a6b" stroke-width="1.700"><circle cx="17" cy="17" r="12"/><path d="M19 5Q8 14 11 27.500M18 5q8 10 4 23M19 5q9 5 10 11M6 13q10 5 21-1M5 19q12 4 24-1M9 26q9 1 17-1"/></svg>Network</div>
  <h6>Tags</h6>
  <div class="it d-flex align-items-center"><svg viewBox="0 0 34 34"><circle cx="17" cy="17" r="9.700" fill="#17b52c"/></svg>Green</div>
  <div class="it d-flex align-items-center"><svg viewBox="0 0 34 34"><circle cx="17" cy="17" r="9" fill="none" stroke="#727071" stroke-width="1.700"/></svg>Home</div>
  <div class="it d-flex align-items-center"><svg viewBox="0 0 34 34"><circle cx="17" cy="17" r="9" fill="none" stroke="#727071" stroke-width="1.700"/></svg>Work</div>
  <div class="it d-flex align-items-center"><svg viewBox="0 0 34 34"><circle cx="17" cy="17" r="9.700" fill="#e9b500"/></svg>Yellow</div>
  <div class="it d-flex align-items-center"><svg viewBox="0 0 34 34"><circle cx="17" cy="17" r="9" fill="none" stroke="#727071" stroke-width="1.700"/></svg><span class="pt-1">Important</span></div>
 </aside>
 <div class="d-flex flex-column flex-grow-1">
  <div style="height:252px;padding-top:21px;flex:none">
   <div class="d-flex align-items-center"><span class="lbl text-end">Save As:</span><div class="fld">AMS_HeartBox_Laser</div></div>
   <div class="d-flex align-items-center" style="margin-top:22px"><span class="lbl text-end">Tags:</span><div class="fld"></div></div>
   <div class="d-flex align-items-center" style="margin:41px 0 0 39px">
    <div class="pb" style="width:47px"><svg width="14" height="24" viewBox="0 0 14 24" fill="none" stroke="#a3a3a3" stroke-width="2.200" style="margin-right:3px"><path d="M13 1L1.500 12 13 23"/></svg></div>
    <div class="pb" style="width:47px;margin-left:2px"><svg width="14" height="24" viewBox="0 0 14 24" fill="none" stroke="#a3a3a3" stroke-width="2.200"><path d="M1 1l11.500 11L1 23"/></svg></div>
    <div class="pb" style="width:93px;margin-left:15px;gap:16px;padding-left:5px"><svg width="31" height="24" viewBox="0 0 31 24" fill="none" stroke="#222" stroke-width="2.200"><rect x="1.200" y="1.200" width="28.500" height="21.500" rx="3"/><path d="M10.500 1v22M20.500 1v22"/></svg><svg width="15" height="8" viewBox="0 0 15 8" fill="none" stroke="#222" stroke-width="3" stroke-linecap="round" style="margin-top:1px"><path d="M1.500 1.500l6 5 6-5"/></svg></div>
    <div class="pb" style="width:91px;margin-left:15px;gap:17px;padding-left:5px"><svg width="28" height="28" viewBox="0 0 28 28" fill="none" stroke="#222" stroke-width="2"><path d="M0 1h28M0 15.500h28"/><rect x="1" y="5" width="6" height="6" rx="1"/><rect x="11" y="5" width="6" height="6" rx="1"/><rect x="21" y="5" width="6" height="6" rx="1"/><rect x="1" y="20" width="6" height="6" rx="1"/><rect x="11" y="20" width="6" height="6" rx="1"/><rect x="21" y="20" width="6" height="6" rx="1"/></svg><svg width="15" height="8" viewBox="0 0 15 8" fill="none" stroke="#222" stroke-width="3" stroke-linecap="round" style="margin-top:1px"><path d="M1.500 1.500l6 5 6-5"/></svg></div>
    <div class="pb justify-content-between" style="width:414px;margin-left:61px;padding:0 4px 0 15px"><span class="d-flex align-items-center"><svg width="32" height="32"><use href="#folder"/></svg><span style="margin-left:9px;margin-top:-1px">DigiFab</span></span><svg width="32" height="32" viewBox="0 0 32 32"><rect width="32" height="32" rx="7" fill="#da3f9a"/><path d="M10 12l6-6 6 6M10 20.500l6 6 6-6" fill="none" stroke="#fff" stroke-width="3" stroke-linecap="round"/></svg></div>
    <div class="pb" style="width:40px;margin-left:16px"><svg width="14" height="9" viewBox="0 0 14 9" fill="none" stroke="#222" stroke-width="3" stroke-linecap="round"><path d="M1.500 7.500L7 2l5.500 5.500"/></svg></div>
    <div class="fld" style="width:305px;margin-left:64px;padding-left:13px;color:#bdbdbd;letter-spacing:-.01em"><svg width="26" height="26" viewBox="0 0 26 26" fill="none" stroke="#222" stroke-width="2.400"><circle cx="10.500" cy="10.500" r="9"/><path d="M17 17l7.500 7.500" stroke-width="3"/></svg><span style="margin-left:14px;margin-top:2px">Search</span></div>
   </div>
  </div>
  <div class="d-flex flex-grow-1" style="border-top:2px solid #e2e2e2">
   <div class="files">
    <div style="color:#262626;letter-spacing:-.008em"><svg class="fi"><use href="#folder"/></svg><span class="flex-grow-1">alizasiniscalchi.github.io</span><svg width="8" height="13" viewBox="0 0 8 13" fill="none" stroke="#888" stroke-width="1.800" style="margin-right:4px"><path d="M1 .8l5.500 5.700L1 12.200"/></svg></div>
    <div><svg class="fi"><use href="#doc"/></svg><span style="letter-spacing:.001em">AMS_FDM_C..._5h41m.gcode</span></div>
    <div><svg class="fi"><use href="#stl"/></svg>AMS_FDM_Cup v0.stl</div>
    <div><svg class="fi"><use href="#doc"/></svg><span style="letter-spacing:0">AMS_FDM_C..._7h4m.gcode</span></div>
    <div><svg class="fi"><use href="#stl"/></svg><span style="letter-spacing:.001em">AMS_FDM_Cup_Redo v1.stl</span></div>
    <div><svg class="fi"><use href="#svgdoc"/></svg>AMS_HeartBox_Laser.svg</div>
    <div><svg class="fi"><use href="#f3d"/></svg><span style="letter-spacing:-.005em">AMS_PencilHolder_FDM.f3d</span></div>
    <div><svg class="fi"><use href="#stl2"/></svg><span style="letter-spacing:-.005em">FDM_Training v0.stl</span></div>
   </div>
  </div>
  <div class="foot d-flex align-items-center">
   <div class="pb" style="width:180px;padding-right:2px">New Folder</div>
   <div class="pb ms-auto" style="width:145px">Cancel</div>
   <div class="pb save" style="width:144px;margin-left:16px">Save</div>
  </div>
 </div>
</section>
<script>
// Kerf-bent wall: alternating slits at a fixed pitch
const pitch = 23.57;
let slits = '';
for (let i = 0; i < 29; i++) { const x = 21.9 + i * pitch; slits += `M${x} 1127V1290.500M${x} 1313.500V1478`; }
for (let i = 0; i < 30; i++) { slits += `M${9.8 + i * pitch} 1150V1454.500`; }
for (let i = 0; i < 38; i++) {
  const x = 796.5 + i * pitch;
  slits += `M${x} 1127V1290.500M${x} 1313.500V1478`;
  slits += `M${x + 11.8} 1150V1454.500`;
}
document.getElementById('hinge').setAttribute('d', slits);
// Finger joints along the heart's lower edge
let a = 'M384 1085';
for (let x = 414; x < 680; x += 47.2) a += `H${x}V1108.500H${x + 24.500}V1085`;
document.getElementById('teethA').setAttribute('d', a);
// Outline of the second wall, joints on three sides
let b = 'M782 1290H757V1314.500H782V1337.500H757V1362H782V1384.500H757V1409.500H782V1478';
for (let i = 0; i < 12; i++) { const x = 1727 + i * 47.15; b += `H${x}V1454.500H${x + 22.600}V1478`; }
b += 'H2301V1409H2324.500V1384H2301';
for (const y of [1362, 1315, 1267, 1220]) b += `V${y}H2324.500V${y - 24.500}H2301`;
b += 'V1127H2268.500V1150.500H2245.500V1127H2200';
document.getElementById('teethB').setAttribute('d', b);
</script>
</body>
</html>
